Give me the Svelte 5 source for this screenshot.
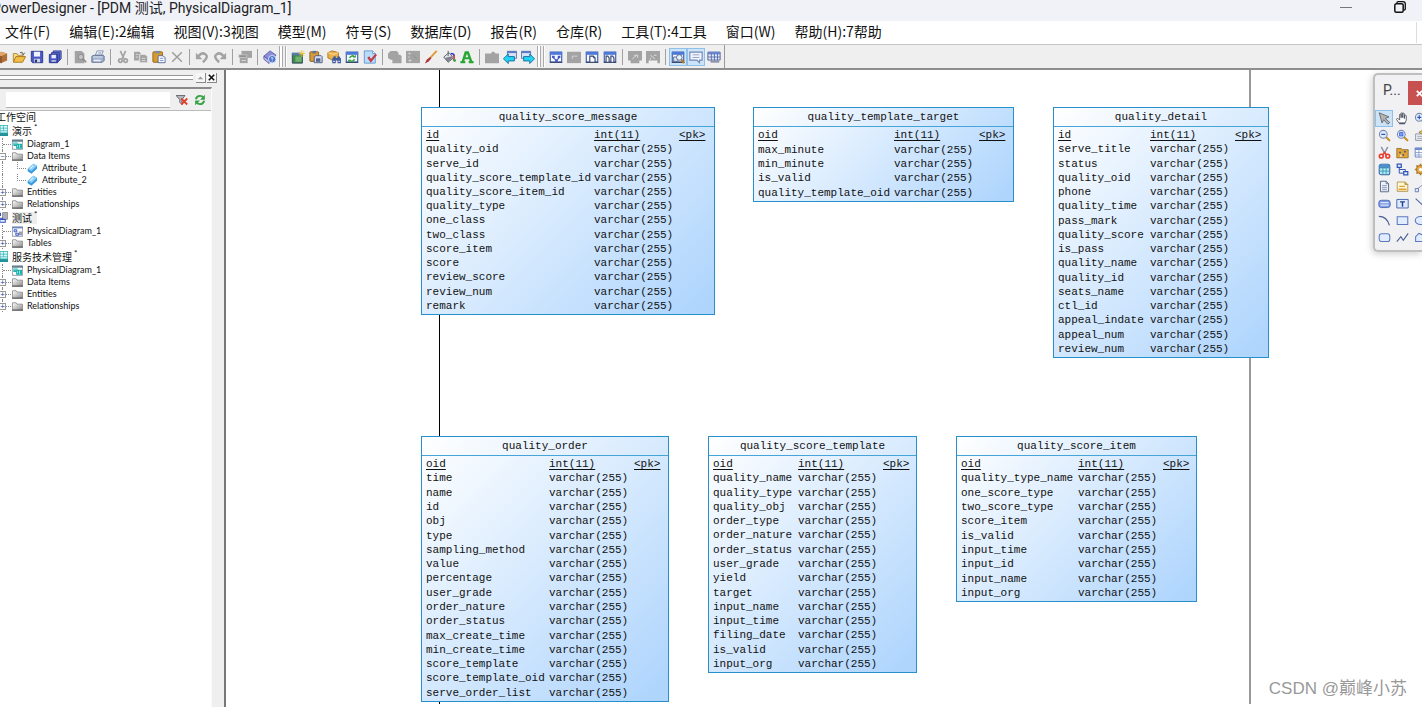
<script>
  const menus = ['文件(F)', '编辑(E):2编辑', '视图(V):3视图', '模型(M)', '符号(S)', '数据库(D)', '报告(R)', '仓库(R)', '工具(T):4工具', '窗口(W)', '帮助(H):7帮助'];

  // '|' is a separator, '||' is a band grip
  const tools = ['box', 'open', 'save', 'saveall', '|', 'preview', 'print', '|', 'cutgray', 'copygray', 'paste', 'delete', '|', 'undo', 'redo', '|', 'props', '|', 'help', '||',
    'newmodel', 'clip', 'find', 'refreshwin', 'check', '|', 'shapes', 'graybox', 'brush', 'bucket', 'font', '|', 'tab', 'back', 'forward', '||',
    'windia', 'graywin', 'winpage', 'winpages', '|', 'arrowgray', 'arrowgray2', '|', 'winfind', 'note', 'gridwin'];
  const pressed = ['winfind', 'note'];

  const palette = ['pointer', 'hand', 'zoomin', 'zoomout', 'zoomfit', 'propsheet', 'cut', 'package', 'tablelist', 'table', 'reference', 'gear',
    'file', 'notepaper', 'link', 'title', 'textbox', 'line', 'arc', 'rect', 'ellipse', 'rounded', 'polyline', 'polygon'];

  const tree = [
    { t: '工作空间', level: 0, root: true },
    { t: '演示', mark: true, level: 1, icon: 'cdm', root: true },
    { t: 'Diagram_1', level: 2, icon: 'cdiagram' },
    { t: 'Data Items', level: 2, icon: 'folder', sign: '−' },
    { t: 'Attribute_1', level: 3, icon: 'attr' },
    { t: 'Attribute_2', level: 3, icon: 'attr' },
    { t: 'Entities', level: 2, icon: 'folder', sign: '+' },
    { t: 'Relationships', level: 2, icon: 'folder', sign: '+' },
    { t: '测试', mark: true, level: 1, icon: 'pdm', root: true, active: true },
    { t: 'PhysicalDiagram_1', level: 2, icon: 'pdiagram' },
    { t: 'Tables', level: 2, icon: 'folder', sign: '+' },
    { t: '服务技术管理', mark: true, level: 1, icon: 'cdm', root: true },
    { t: 'PhysicalDiagram_1', level: 2, icon: 'cdiagram' },
    { t: 'Data Items', level: 2, icon: 'folder', sign: '+' },
    { t: 'Entities', level: 2, icon: 'folder', sign: '+' },
    { t: 'Relationships', level: 2, icon: 'folder', sign: '+' },
  ];

  // canvas coordinates; c1 and c2 are the widths of the name and type columns
  const entities = [
    { name: 'quality_score_message', x: 195, y: 37, w: 294, h: 208, c1: 168, c2: 85,
      cols: 'id quality_oid serve_id quality_score_template_id quality_score_item_id quality_type one_class two_class score_item score review_score review_num remark' },
    { name: 'quality_template_target', x: 527, y: 37, w: 261, h: 95, c1: 136, c2: 85,
      cols: 'oid max_minute min_minute is_valid quality_template_oid' },
    { name: 'quality_detail', x: 827, y: 37, w: 216, h: 251, c1: 92, c2: 85,
      cols: 'id serve_title status quality_oid phone quality_time pass_mark quality_score is_pass quality_name quality_id seats_name ctl_id appeal_indate appeal_num review_num' },
    { name: 'quality_order', x: 195, y: 366, w: 248, h: 266, c1: 123, c2: 85,
      cols: 'oid time name id obj type sampling_method value percentage user_grade order_nature order_status max_create_time min_create_time score_template score_template_oid serve_order_list' },
    { name: 'quality_score_template', x: 482, y: 366, w: 209, h: 237, c1: 85, c2: 85,
      cols: 'oid quality_name quality_type quality_obj order_type order_nature order_status user_grade yield target input_name input_time filing_date is_valid input_org' },
    { name: 'quality_score_item', x: 730, y: 366, w: 241, h: 166, c1: 117, c2: 85,
      cols: 'oid quality_type_name one_score_type two_score_type score_item is_valid input_time input_id input_name input_org' },
  ];

  const g = '#a3a3a3';
  const win = (body) => `<rect x="1.5" y="2.5" width="13" height="11.5" fill="#f4f8ff" stroke="#4a68b0" stroke-width="1.4"/><path d="M1 2h14v3.500H1z" fill="#4d78d8"/><path d="M1 14h14" stroke="#38466e" stroke-width="1.5"/>${body}`;
  const lens = (body) => `<path d="M9.5 9.5l4.5 4.5" stroke="#c98f22" stroke-width="2.6" stroke-linecap="round"/><circle cx="6.5" cy="6.5" r="4.8" fill="#dcecff" stroke="#7c8aa8" stroke-width="1.3"/>${body}`;

  const icons = {
    box: '<path d="M1 5l7-3 7 2v8l-7 3-7-2z" fill="#b0703c"/><path d="M1 5l7-3 7 2-7 3z" fill="#e0a56c"/><path d="M8 7v8M4 9l3 1" stroke="#6b3c18"/>',
    open: '<path d="M1.5 13V4h4l1 2h6v3" fill="#f7dd83" stroke="#a98530"/><path d="M1.5 14l3-6.5h11l-3.5 6.5z" fill="#f4bd45" stroke="#a07520"/><path d="M9 3q3-2 4 2m1.5-2L13 5.5 11 4" fill="none" stroke="#565b66"/>',
    save: '<path d="M1.5 1.5h13v13H3l-1.5-1.5z" fill="#4a58c4" stroke="#27338c"/><path d="M4.5 2h7v5.5h-7z" fill="#eef3ff"/><path d="M4.5 10h7v4h-7z" fill="#cfd4e4"/><path d="M5.5 11h2.5v3H5.5z" fill="#2b3472"/>',
    saveall: '<path d="M6 1h9v9l-2 2H6z" fill="#7180d8" stroke="#2d388e"/><path d="M4 3h9v9l-2 2H4z" fill="#5a69cc" stroke="#2d388e"/><path d="M1.5 5h9.5v9.5H1.500z" fill="#4a58c4" stroke="#27338c"/><path d="M4 5.5h5v4H4z" fill="#e8eeff"/><path d="M4 11.5h5v2H4z" fill="#b8c0dc"/>',
    preview: `<path d="M2 1h8l3 3v11H2z" fill="${g}"/><circle cx="9" cy="8" r="3" fill="#c4c4c4" stroke="#888"/><path d="M11 10l4 4" stroke="#888" stroke-width="2"/>`,
    print: '<path d="M5 6l2-5h7l-2 5z" fill="#fff" stroke="#7a88a8"/><path d="M1 7l3-1h10l1 1v5l-2 2H1z" fill="#9fb0cf" stroke="#56678c"/><path d="M2 8h11" stroke="#e6eefc"/><path d="M3 11h8v2H3z" fill="#e9eef8"/><path d="M8 3h4M7.5 4.5h4" stroke="#9aa8c4"/>',
    cutgray: `<path d="M5 1l4 9M11 1L7 10" stroke="${g}" stroke-width="2"/><circle cx="5" cy="12" r="2" fill="none" stroke="${g}" stroke-width="2"/><circle cx="11" cy="12" r="2" fill="none" stroke="${g}" stroke-width="2"/>`,
    copygray: `<path d="M0 2h6l2 2v8H0z" fill="${g}"/><path d="M6.5 5h6l3 2.5v7h-9z" fill="${g}" stroke="#e8e8e8"/><path d="M9 9.500h4M9 12h4M2 5h3M2 8h3" stroke="#ddd"/>`,
    paste: '<rect x="1" y="2" width="11" height="12" rx="1" fill="#d99a2e" stroke="#8c6418"/><rect x="4" y="1" width="5" height="3" fill="#808aa0"/><path d="M7 6.5h5l3 2v6H7z" fill="#f4f8ff" stroke="#55699c"/><path d="M9 9.5h4M9 12h4" stroke="#7a92c4"/>',
    delete: '<path d="M2.5 2.5l11 11M13.500 2.500l-11 11" stroke="#9b9b9b" stroke-width="1.6"/>',
    undo: `<path d="M4 7q4-5 8-2t-3 9" fill="none" stroke="${g}" stroke-width="2.8"/><path d="M1 3v7.500h7.500z" fill="${g}"/>`,
    redo: `<path d="M12 7q-4-5-8-2t3 9" fill="none" stroke="${g}" stroke-width="2.8"/><path d="M15 3v7.500h-7.500z" fill="${g}"/>`,
    props: `<path d="M4 1h12v8H4z" fill="${g}"/><path d="M2 6h9v9H2z" fill="${g}"/><path d="M1 5.500h9v3H1z" fill="#8f8f8f" stroke="#c8c8c8"/><path d="M4 12h5" stroke="#ddd"/>`,
    help: '<path d="M1 7l7-6 7 5-7 6z" fill="#8d8cd8" stroke="#5c5cae"/><path d="M1 7v3.500l6 5V12z" fill="#b8bbec" stroke="#5c5cae"/><circle cx="10.5" cy="10.5" r="4.3" fill="#4c74cc" stroke="#dfe8ff"/><path d="M9 9.5q1.5-2 2.5 0l-1 1.5m0 1v1" fill="none" stroke="#fff"/>',
    newmodel: '<path d="M1.500 4h11.500v11H1.500z" fill="#43884f" stroke="#27405e"/><path d="M1 3h10v3H1z" fill="#5a7aa8"/><path d="M5 7.500h7v6H5z" fill="#6db36e"/><path d="M12.5 0v8M9 4h7M10 1.5l5 5M15 1.5l-5 5" stroke="#efc63a"/>',
    clip: '<rect x="1" y="2" width="10" height="11" rx="1" fill="#d79c37" stroke="#7f5b18"/><rect x="4" y="1" width="4" height="3" fill="#66728f"/><path d="M6 7.5l2-1h6l1 1v7H6z" fill="#d5def0" stroke="#46547c"/><path d="M8 9.5h5v4H8z" fill="#52628c"/>',
    find: '<path d="M1 3l5-2 7 2v7l-6 2-6-3z" fill="#eab14d" stroke="#a67420"/><path d="M1 3l6 2 6-2" stroke="#fbe2a4" fill="none"/><path d="M6 10l2-3h2v2h2V7h2l2 3v5h-4v-3h-2v3H6z" fill="#3d5a9c"/><path d="M7 13h2M13 13h2" stroke="#c7daff" stroke-width="1.500"/>',
    refreshwin: win('<path d="M5 9q3-4 6-1M11 10.500q-3 4-6 1" fill="none" stroke="#3da53b" stroke-width="1.8"/><path d="M9 8.500h3.500V5.500zM7 11H3.500v3z" fill="#3da53b"/>'),
    check: '<path d="M1.500 1h9.500l3 3v11H1.500z" fill="#b9dcfa" stroke="#5b97cf"/><path d="M11 1v3h3" fill="#fff" stroke="#5b97cf"/><path d="M6 8l3 4.500 6-7.500" fill="none" stroke="#c33c43" stroke-width="2.6"/>',
    shapes: `<path d="M0 4l3-3h7l2 2v8H3l-3-2z" fill="${g}"/><path d="M5 5.500h9l1.500 1.500v8H5z" fill="${g}"/>`,
    graybox: `<path d="M0 1h16v14H0z" fill="${g}"/><path d="M3 4h2M3 8h1M3 12h3" stroke="#ddd" stroke-width="1.5"/><path d="M8 6l4 4" stroke="#8b8b8b"/>`,
    brush: '<path d="M14.5 1L7 9" stroke="#e19a33" stroke-width="2.2"/><path d="M7 8l1.5 1.5L5 13.500l-4 2 2-4.500z" fill="#a9343b"/>',
    bucket: '<path d="M2 8l6-5 5 6-6 5z" fill="#e6e8ec" stroke="#51565f"/><path d="M7 1v6" stroke="#51565f"/><path d="M3 9l8-2 1 2-5 5z" fill="#7d8490"/><path d="M10 4q4 0 4 3" fill="none" stroke="#2d3fd0" stroke-width="1.800"/><path d="M13 6q2 2 0 6" fill="none" stroke="#d23a3a" stroke-width="1.800"/><circle cx="14.500" cy="12" r="1.6" fill="#38a94c"/>',
    font: '<path d="M5.5 1.500h4.500l4 11H15.500V15h-5.500v-2.500h1l-.6-1.800H5.5L5 12.500h1V15H.5v-2.500H2zM6.300 8.300h3.200L8 4.300z" fill="#2aa635"/>',
    tab: `<path d="M0 4h7l1-2h2.500l1.500 2h4v11H0z" fill="${g}"/>`,
    back: '<path d="M5 1.500h10.500v8H5z" fill="#d7e2f5" stroke="#566ea4"/><path d="M5 1.500h10.500v2H5z" fill="#5778c8"/><path d="M.5 10l5.500-5.500v3h7v5H6v3z" fill="#1fd5f2" stroke="#13679e"/>',
    forward: '<path d="M.5 1.500h10.500v8H.5z" fill="#d7e2f5" stroke="#566ea4"/><path d="M.5 1.500h10.500v2H.5z" fill="#5778c8"/><path d="M15.500 10l-5.500-5.500v3H3v5h7v3z" fill="#1fd5f2" stroke="#13679e"/>',
    windia: win('<path d="M3.500 6.500h3v2.500h-3zM10 6.500h3v2.500h-3zM7 11h3v2.500H7z" fill="#4452c8"/><path d="M5 9l3.500 3L12 8.500" fill="none" stroke="#4452c8" stroke-width="1.300"/>'),
    graywin: `<path d="M0 2h16v13H0z" fill="${g}"/><path d="M6 7h6M6 7v3" stroke="#d8d8d8"/>`,
    winpage: win('<path d="M5.5 7h4l2 2v5h-6z" fill="#fff" stroke="#35466e" stroke-width="1.300"/><path d="M9.5 7v2h2" fill="none" stroke="#35466e"/>'),
    winpages: win('<path d="M3.5 7h2l1.5 2v5H3.500zM9 7h2l1.5 2v5H9z" fill="#fff" stroke="#35466e" stroke-width="1.300"/>'),
    arrowgray: `<path d="M0 1h16v11h-3v3H3v-3H0z" fill="${g}"/><path d="M5 10l5-4M7 6h4v3" fill="none" stroke="#e2e2e2"/>`,
    arrowgray2: `<path d="M0 1h16v14h-3v-3H3v3H0z" fill="${g}"/><path d="M5 6l5 4M9 6h3M5 9v2" fill="none" stroke="#e2e2e2"/>`,
    winfind: win('<path d="M3 8h5v5H3z" fill="#dbe4f4" stroke="#56678c"/><circle cx="9.5" cy="8.5" r="3.2" fill="#e6f3ff" stroke="#4f5f80"/><path d="M12 11l3 4" stroke="#b9772a" stroke-width="2.6"/>'),
    note: '<path d="M1 2.500h14v9h-3v3l-3-3H1z" fill="#f3f7ff" stroke="#7386b4" stroke-width="1.300"/><path d="M4 5.500h8M4 8.500h8" stroke="#8496c0"/>',
    gridwin: '<path d="M1 2.5h14v9H1z" fill="#dfe7fa" stroke="#49598c"/><path d="M1 2h14v3H1z" fill="#6b86cc"/><path d="M1 8h14M5 4v8M8.5 4v8M12 4v8" stroke="#5568a4"/><path d="M4 13.5h10" stroke="#8d95a8" stroke-width="2"/>',
    funnel: '<path d="M0 2h12L8 7.500V14l-3-3V7.500z" fill="#b5b8be" stroke="#4b4f58"/><path d="M7 6l8 8M15 6l-8 8" stroke="#e0402c" stroke-width="2.4"/>',
    refresh: '<path d="M2.500 7q1-4.500 5.500-4.500 3 0 4.500 2.500M13.500 9q-1 4.500-5.500 4.500-3 0-4.500-2.500" fill="none" stroke="#36a344" stroke-width="2.6"/><path d="M14.500 1V7.500H8zM1.500 15V8.500h6.500z" fill="#36a344"/>',
    pointer: '<path d="M1.500 1l12 5-4.500 2 5.500 5-2.500 2-5-5.500L5 13.500z" fill="#b4b4b4" stroke="#5e5e5e"/>',
    hand: '<path d="M4 14l-3.500-5 1.500-1.500L4.5 10V3q1-1 1.8 0v4-5.500q1-1.500 2 0v5.500-5q1-1 2 0V8l.3-3.500q1.200-1 2 0V10l-1.600 4z" fill="#fff" stroke="#3f4654"/><path d="M4 13h7v2H4z" fill="#4b5570"/>',
    zoomin: lens('<path d="M4 6.5h5M6.5 4v5" stroke="#3858b8" stroke-width="1.5"/>'),
    zoomout: lens('<path d="M4 6.5h5" stroke="#3858b8" stroke-width="1.5"/>'),
    zoomfit: lens('<rect x="4.5" y="4.5" width="4" height="4" fill="#7ea4ff" stroke="#3858d8"/>'),
    propsheet: '<path d="M2 6h11v8H2z" fill="#eef1f6" stroke="#7d8798"/><path d="M4 9h7M4 11.5h7" stroke="#8d97a8"/><path d="M6 4l6-3 3 3-4 3z" fill="#e5c465" stroke="#8d7330"/>',
    cut: '<path d="M4 1l4.500 8.500M12 1L7.500 9.500" stroke="#8a93a4" stroke-width="1.8"/><circle cx="4" cy="12.500" r="2.3" fill="none" stroke="#ea3a2c" stroke-width="2"/><circle cx="12" cy="12.500" r="2.3" fill="none" stroke="#ea3a2c" stroke-width="2"/><path d="M5.500 11L8 8l2.500 3" fill="none" stroke="#ea3a2c" stroke-width="2"/>',
    package: '<path d="M1 3h5.500l1 1.500h7.500v10H1z" fill="#e0a63c" stroke="#8d6520"/><path d="M4 7h2v2H4zM10 6h2v2h-2zM8 10h2v2H8z" fill="#364a78"/><path d="M5 11h2v2H5z" fill="#fff0c0"/>',
    tablelist: '<path d="M1.500 2.500h13v11h-13z" fill="#fff" stroke="#5b75b0"/><path d="M1 2h14v3H1z" fill="#6e8cd0"/><path d="M1 8h14M1 11h14M6 3v11M10.5 3v11" stroke="#7f98cc"/>',
    table: '<rect x="1.5" y="1.500" width="13" height="13" rx="2.5" fill="#a8ecf2" stroke="#33649e" stroke-width="1.300"/><path d="M1.5 6V4q0-2.500 2.500-2.500h8q2.500 0 2.500 2.500v2z" fill="#4f8fcc"/><path d="M2 6h12M2 10h12M6 6v8M10 6v8" stroke="#3d8bb0"/>',
    reference: '<path d="M1.5 1.5h5v4h-5zM9.5 10.5h5v4h-5z" fill="#e8f0ff" stroke="#2f55b4" stroke-width="1.5"/><path d="M4 6v6.5h5M4 8h7.5v2" fill="none" stroke="#2f55b4" stroke-width="1.200"/>',
    gear: '<circle cx="8" cy="8" r="5" fill="#e5a94a" stroke="#916522"/><path d="M8 1v3M8 12v3M1 8h3M12 8h3M3 3l2 2M11 11l2 2M13 3l-2 2M5 11l-2 2" stroke="#b57b28" stroke-width="2"/><circle cx="8" cy="8" r="2" fill="#fff"/>',
    file: '<path d="M3 1.5h7l3 3v10H3z" fill="#eef3fb" stroke="#5a6a88" stroke-width="1.200"/><path d="M10 1.5v3h3" fill="none" stroke="#5a6a88"/><path d="M5 7h6M5 9.500h6M5 12h6" stroke="#7182a4"/>',
    notepaper: '<path d="M1.5 2.5h10l3 3v8.500h-13z" fill="#fff7d6" stroke="#a98c42"/><path d="M11 2.5v3h3.5" fill="#e5a52e" stroke="#a98c42"/><path d="M4 7h7v1.5H4zM3 10.500h10v2H3z" fill="#e0a33c"/>',
    link: '<path d="M3 12L13 4" stroke="#6b82b8"/><path d="M1.5 10.5h4v4h-4zM11 2h4v4h-4z" fill="#e3ebfb" stroke="#5570ac"/>',
    title: '<rect x="1" y="4" width="14" height="9" rx="3" fill="#7f9de2" stroke="#425fae"/><path d="M3 7h10M3 10h10" stroke="#eef3ff" stroke-width="1.2"/>',
    textbox: '<path d="M1 3h14v10.500H1z" fill="#dfeaff" stroke="#4a68b0" stroke-width="1.200"/><path d="M5 6h6M8 6v6" stroke="#243f8c" stroke-width="1.800"/>',
    line: '<path d="M2 2l12 11" stroke="#5069a4" stroke-width="1.3"/>',
    arc: '<path d="M1 3q10 0 13 11" fill="none" stroke="#4a5f94" stroke-width="1.4"/>',
    rect: '<path d="M1.5 3.5h13v9.500h-13z" fill="#e0ecff" stroke="#5b79bc" stroke-width="1.3"/>',
    ellipse: '<ellipse cx="8" cy="8" rx="6.5" ry="5" fill="#e0ecff" stroke="#5b79bc" stroke-width="1.3"/>',
    rounded: '<rect x="1.5" y="3.5" width="13" height="9.500" rx="3" fill="#e0ecff" stroke="#5b79bc" stroke-width="1.3"/>',
    polyline: '<path d="M1 13l5-6 3 4.500 6-8.500" fill="none" stroke="#4a5f94" stroke-width="1.4"/>',
    polygon: '<path d="M2 13V7l4-4 8 3v7z" fill="#e0ecff" stroke="#5b79bc" stroke-width="1.3"/>',
    cdm: '<path d="M0 0h16v16H0z" fill="#38aeb4"/><path d="M5 1h4v3H5zM10 1h5v3h-5zM5 5h4v3H5zM10 5h5v3h-5zM5 9h10v2H5z" fill="#d8fafa"/><path d="M0 12h16v4H0z" fill="#23919a"/><path d="M0 2h3v9H0z" fill="#e5ffff"/>',
    pdm: '<path d="M8 1q4-2 8 0v9q-4 2-8 0z" fill="#b0b0b4" stroke="#77777c"/><path d="M1 2h4v3H1zM4 11h8v4H4z" fill="#e6eeff" stroke="#2d50c0" stroke-width="1.5"/><path d="M3 5v4h5v2" fill="none" stroke="#2d50c0" stroke-width="1.5"/>',
    cdiagram: '<path d="M.5 1.5h15v13.500H.5z" fill="#fff" stroke="#5d7386"/><path d="M0 1h16v3H0z" fill="#63808e"/><path d="M2 5h6v5H2zM6 7h8.500v7H6z" fill="#19b0aa"/><path d="M8 9v3M11 8v5M3 7h4" stroke="#c8ffff"/>',
    pdiagram: '<path d="M.5 1.5h15v13.500H.5z" fill="#fff" stroke="#5d6e96"/><path d="M0 1h16v2.500H0z" fill="#6d86c0"/><path d="M3 5.500h4v3H3zM5.500 10.500h4v3h-4z" fill="#dfe8ff" stroke="#2d50c0" stroke-width="1.300"/><path d="M10 8h4.500v5.500H10z" fill="#9a9ca4"/>',
    attr: '<path d="M1 8.500L9.500 1l5 3v4.500L6.500 15.500 1 12z" fill="#3a9be0"/><path d="M1 8.500L9.500 1l5 3-8 7.500z" fill="#8fd0fa"/><path d="M5 8l4-4" stroke="#e9f8ff" stroke-width="1.500"/>',
  };
</script>

{#snippet icon(name)}
  <svg viewBox="0 0 16 16" aria-hidden="true">{@html icons[name]}</svg>
{/snippet}

<div class="app">
  <header class="titlebar">
    <h1>PowerDesigner - [PDM 测试, PhysicalDiagram_1]</h1>
    <div class="winctl">
      <button aria-label="Minimize"><svg viewBox="0 0 12 12"><path d="M0 6.5h12" stroke="#777" /></svg></button>
      <button aria-label="Restore"><svg viewBox="0 0 12 12"><path d="M3 3V1.5Q3 .7 4 .7h5q2.3 0 2.3 2.3v5q0 1-1.3 1" fill="none" stroke="#111" stroke-width="1.3" /><rect x=".8" y="2.8" width="8.4" height="8.4" rx="1.5" fill="none" stroke="#111" stroke-width="1.5" /></svg></button>
    </div>
  </header>

  <nav class="menubar">
    {#each menus as m}<button>{m}</button>{/each}
    <span class="menu-end"></span>
  </nav>

  <div class="toolbar" role="toolbar" aria-label="Tools">
    {#each tools as t}
      {#if t === '|'}<span class="sep"></span>
      {:else if t === '||'}<span class="grip"></span>
      {:else}<button class:pressed={pressed.includes(t)} aria-label={t}>{@render icon(t)}</button>{/if}
    {/each}
    <span class="band-end"></span>
  </div>

  <main class="work">
    <aside class="browser">
      <div class="dock">
        <span class="dock-grip"></span>
        <button aria-label="Expand"><svg viewBox="0 0 10 10"><path d="M2 7l3-3 3 3z" fill="#9a9a9a" /></svg></button>
        <button aria-label="Close"><svg viewBox="0 0 10 10"><path d="M2 2l6 6M8 2L2 8" stroke="#111" stroke-width="1.8" /></svg></button>
      </div>
      <div class="pane">
        <div class="filter">
          <input type="text" aria-label="Filter" />
          <button aria-label="Clear filter">{@render icon('funnel')}</button>
          <button aria-label="Refresh">{@render icon('refresh')}</button>
        </div>
        <ul class="tree">
          {#each tree as n}
            <li class="l{n.level}" class:root={n.root}>
              {#if n.sign}<span class="sign">{n.sign}</span>{/if}
              {#if n.icon === 'folder'}
                <svg class="folder" viewBox="0 0 12 10" aria-hidden="true">
                  <defs><linearGradient id="fold" x1="0" y1="0" x2="1" y2="1"><stop offset="0" stop-color="#fff" /><stop offset="1" stop-color="#8c8c8c" /></linearGradient></defs>
                  <path d="M.5 9.500v-8h4l1 1.500h6v6.500z" fill="url(#fold)" stroke="#909090" /><path d="M0 9.500h12" stroke="#4c4c4c" />
                </svg>
              {:else if n.icon}{@render icon(n.icon)}{/if}
              <span class="label" class:active={n.active}>{n.t}{#if n.mark}<sup>*</sup>{/if}</span>
            </li>
          {/each}
        </ul>
      </div>
    </aside>

    <section class="canvas" aria-label="PhysicalDiagram_1">
      <i class="guide dark"></i>
      <i class="guide page"></i>
      {#each entities as e}
        <article class="entity" style="left:{e.x}px;top:{e.y}px;width:{e.w}px;height:{e.h}px">
          <h2>{e.name}</h2>
          <table>
            <colgroup><col style="width:{e.c1}px" /><col style="width:{e.c2}px" /><col /></colgroup>
            <tbody>
              {#each e.cols.split(' ') as c, i}
                <tr class:key={i === 0}>
                  <td>{c}</td>
                  <td>{i === 0 ? 'int(11)' : 'varchar(255)'}</td>
                  <td>{i === 0 ? '<pk>' : ''}</td>
                </tr>
              {/each}
            </tbody>
          </table>
        </article>
      {/each}

      <div class="palette">
        <div class="palette-head"><span>P...</span><button aria-label="Close palette"><svg viewBox="0 0 10 10"><path d="M2 2l6 6M8 2L2 8" stroke="#fff" stroke-width="2" /></svg></button></div>
        <div class="palette-grid">
          {#each palette as p, i}<button class:pressed={i === 0} aria-label={p}>{@render icon(p)}</button>{/each}
        </div>
      </div>

      <p class="credit">CSDN @巅峰小苏</p>
    </section>
  </main>
</div>

<style>
  :global(body) { overflow: hidden; background: #fff; }
  .app {
    display: flex; flex-direction: column; height: 100vh; overflow: hidden;
    font-family: Roboto, "Noto Sans CJK SC", sans-serif; color: #111;
  }
  button { padding: 0; border: 0; background: none; font: inherit; color: inherit; }
  svg { display: block; }

  .titlebar { display: flex; justify-content: space-between; align-items: flex-start; height: 21px; flex: none; background: #f0f2f8; overflow: hidden; }
  .titlebar h1 { margin: 0 0 0 -8px; font-size: 14px; line-height: 16px; font-weight: 400; color: #222; white-space: nowrap; }
  .winctl { display: flex; gap: 42px; padding: 1px 16px 0 0; }
  .winctl svg { width: 12px; height: 12px; }

  .menubar { display: flex; gap: 19px; align-items: center; height: 23px; flex: none; padding-left: 5px; background: #fff; font-family: "Noto Sans CJK SC", sans-serif; font-size: 14px; line-height: 20px; white-space: nowrap; }
  .menubar button { margin-top: -3px; }
  .menu-end { margin-left: auto; width: 5px; height: 21px; border-left: 1px solid #ddd; }

  .toolbar { display: flex; align-items: center; height: 23px; flex: none; padding-left: 10px; margin-left: -18px; background: #efefef; border-top: 1px solid #c4c4c4; border-bottom: 2px solid #8e8e8e; }
  .toolbar button { display: grid; place-items: center; width: 18px; height: 18px; flex: none; }
  .toolbar svg { width: 14px; height: 14px; }
  .toolbar .pressed, .palette .pressed { background: #cce4f8; box-shadow: inset 0 0 0 1px #90c0e8; }
  .sep { width: 7px; height: 16px; flex: none; background: linear-gradient(#a0a0a0, #a0a0a0) 3px 0 / 1px 100% no-repeat; }
  .grip { width: 10px; height: 21px; flex: none; background: linear-gradient(90deg, #aaa 1px, #fff 1px 3px, #aaa 3px 4px, #efefef 4px 6px, #aaa 6px 7px, #fff 7px 8px, #efefef 8px); }
  .band-end { width: 1px; height: 23px; margin-left: 1px; background: #999; }

  .work { display: flex; flex: 1; min-height: 0; }
  .browser { display: flex; flex-direction: column; width: 226px; flex: none; box-sizing: border-box; background: #efefef; border-right: 2px solid #777; }
  .dock { display: flex; align-items: center; gap: 1px; height: 13px; padding: 1px 7px 3px 0; }
  .dock-grip { flex: 1; height: 3px; margin-right: 2px; border-top: 1px solid #999; border-bottom: 1px solid #999; background: #fff; }
  .dock button { width: 10px; height: 10px; border-right: 1px solid #888; border-bottom: 1px solid #888; background: #f6f6f6; box-sizing: border-box; }
  .dock svg { width: 9px; height: 9px; }
  .pane { flex: 1; display: flex; flex-direction: column; margin-right: 12px; border-top: 2px solid #8a8a8a; border-right: 1px solid #fafafa; min-height: 0; }
  .filter { display: flex; flex: none; align-items: center; gap: 6px; height: 21px; padding: 0 5px 0 6px; border-bottom: 1px solid #bbb; }
  .filter input { flex: 1; min-width: 0; height: 16px; padding: 0 2px; border: 0; border-bottom: 1px solid #b0b0b0; background: #fff; box-sizing: border-box; }
  .filter svg { width: 12px; height: 12px; }

  .tree { flex: 1; margin: 0; padding: 0; list-style: none; background: #fff; font: 9px Lato, "Noto Sans CJK SC", sans-serif; color: #111; overflow: hidden; }
  .tree li { display: flex; align-items: center; height: 12px; position: relative; white-space: nowrap; }
  .tree li.root { height: 15px; font-size: 10px; }
  .tree li.l0 { height: 12px; margin-left: -4px; }
  .tree li.l1 { margin-left: -3px; gap: 4px; }
  .tree li.l2 { padding-left: 12px; gap: 4px; }
  .tree li.l3 { padding-left: 27px; gap: 4px; }
  .tree svg { width: 11px; height: 11px; flex: none; }
  .tree .folder { height: 10px; }
  .tree .l2::before, .tree .l3::before { content: ""; position: absolute; left: 2px; top: 0; bottom: 0; border-left: 1px dotted #888; }
  .tree .l2::after { content: ""; position: absolute; left: 3px; top: 6px; width: 8px; border-top: 1px dotted #888; }
  .tree .l3::after { content: ""; position: absolute; left: 17px; top: 0; width: 8px; height: 6px; border-left: 1px dotted #888; border-bottom: 1px dotted #888; }
  .sign { position: absolute; left: -1px; top: 3px; z-index: 1; width: 5px; height: 5px; border: 1px solid #999; background: #fff; font-size: 8px; line-height: 5px; text-align: center; color: #1a3fae; }
  .label { line-height: 12px; }
  .tree .active { background: #eee; }
  .tree sup { margin-left: 2px; font-size: 8px; line-height: 1px; }

  .canvas { position: relative; flex: 1; min-width: 0; overflow: hidden; background: #fff; }
  .guide { position: absolute; top: 0; bottom: 3px; }
  .guide.dark { left: 213px; width: 1px; background: #000; }
  .guide.page { left: 1023px; width: 2px; background: #999; }
  .entity { position: absolute; display: flex; flex-direction: column; box-sizing: border-box; border: 1px solid #2590cc; background: linear-gradient(135deg, #fff, #afd5fd 96%); font-family: "Liberation Mono", monospace; font-size: 11px; line-height: 14px; color: #111; }
  .entity h2 { margin: 0; flex: none; height: 18px; border-bottom: 1px solid #45a5d8; font: inherit; line-height: 18px; text-align: center; }
  .entity table { flex: 1; width: 100%; margin: 1px 0; padding-left: 4px; border-spacing: 0; table-layout: fixed; box-sizing: border-box; }
  .entity td { padding: 0; white-space: nowrap; vertical-align: middle; }
  .key td { text-decoration: underline; text-underline-offset: 2px; }

  .palette { position: absolute; right: 0; top: 3px; width: 49px; overflow: hidden; box-sizing: border-box; padding-bottom: 4px; border: 2px solid #bfbfbf; border-right: 0; border-radius: 5px 0 0 5px; background: #f1f1f3; box-shadow: -1px 2px 7px #0003; }
  .palette-head { display: flex; justify-content: space-between; align-items: flex-start; height: 29px; padding: 6px 0 0 8px; font-size: 14px; line-height: 18px; color: #444; }
  .palette-head button { display: grid; place-items: center start; width: 14px; height: 24px; padding-left: 7px; background: #c75050; box-sizing: border-box; overflow: hidden; }
  .palette-head svg { width: 9px; height: 9px; }
  .palette-grid { display: grid; grid-template-columns: repeat(3, 18px); grid-auto-rows: 17px; }
  .palette-grid button { display: grid; place-items: center; }
  .palette-grid svg { width: 13px; height: 13px; }

  .credit { position: absolute; right: 15px; bottom: 6px; margin: 0; font: 17px/24px "Liberation Sans", "Noto Sans CJK SC", sans-serif; color: #999; }
</style>
